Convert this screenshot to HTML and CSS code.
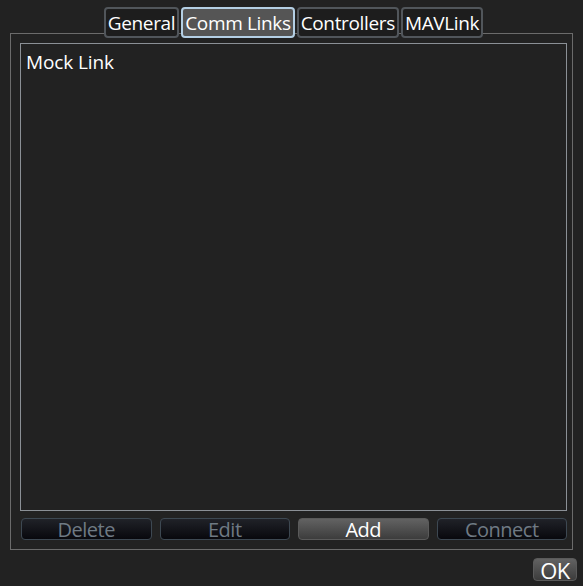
FILE: index.html
```html
<!DOCTYPE html>
<html>
<head>
<meta charset="utf-8">
<link rel="stylesheet" href="styles.css">
</head>
<body>
<div class="dialog">
  <div class="tabbar">
    <div class="tab">General</div>
    <div class="tab active">Comm Links</div>
    <div class="tab">Controllers</div>
    <div class="tab">MAVLink</div>
  </div>
  <div class="frame">
    <div class="list">
      <div class="item">Mock Link</div>
    </div>
    <div class="buttons">
      <div class="btn disabled">Delete</div>
      <div class="btn disabled">Edit</div>
      <div class="btn enabled">Add</div>
      <div class="btn disabled">Connect</div>
    </div>
  </div>
  <div class="footer">
    <div class="btn enabled ok">OK</div>
  </div>
</div>
</body>
</html>
```

FILE: styles.css
```css
html, body {
  margin: 0;
  padding: 0;
  background: #222222;
}
body {
  width: 583px;
  height: 586px;
  overflow: hidden;
  font-family: "Open Sans", "Noto Sans", sans-serif;
  color: #ffffff;
}
.dialog {
  padding: 7px 6px 0 10px;
  display: flex;
  flex-direction: column;
}
.tabbar {
  display: flex;
  justify-content: center;
  gap: 2px;
  height: 31px;
  margin-bottom: -5px;
  padding-left: 0;
  position: relative;
  z-index: 1;
}
.tab {
  box-sizing: border-box;
  height: 31px;
  padding: 0 2px;
  border: 2px solid #51565b;
  border-radius: 4px;
  background: #1d1d1d;
  font-size: 19px;
  line-height: 29px;
  letter-spacing: -0.35px;
  color: #ffffff;
}
.tab.active {
  background: #555555;
  border-color: #b4cfe4;
}
.frame {
  border: 1px solid #6b6b6b;
  margin-right: 4px;
  padding: 9px 5px 9px 9px;
  display: flex;
  flex-direction: column;
}
.list {
  box-sizing: border-box;
  height: 468px;
  border: 1px solid #8b9096;
  padding: 5px 5px;
}
.item {
  font-size: 19px;
  line-height: 26px;
  letter-spacing: -0.1px;
}
.buttons {
  display: grid;
  grid-template-columns: repeat(4, 1fr);
  gap: 8px;
  margin-top: 7px;
  padding-left: 1px;
}
.btn {
  box-sizing: border-box;
  height: 22px;
  border-radius: 4px;
  text-align: center;
  font-size: 20px;
  line-height: 21px;
  letter-spacing: -0.5px;
}
.btn.disabled {
  border: 1px solid #3d4852;
  background: linear-gradient(#202228, #08080d);
  color: #6f7a84;
}
.btn.enabled {
  border: 1px solid #5a5a5a;
  background: linear-gradient(#626262, #3c3c3c);
  color: #ffffff;
}
.footer {
  display: flex;
  justify-content: flex-end;
  margin-top: 8px;
}
.btn.ok {
  width: 44px;
  height: 23px;
  font-size: 22px;
  line-height: 22px;
}
```
